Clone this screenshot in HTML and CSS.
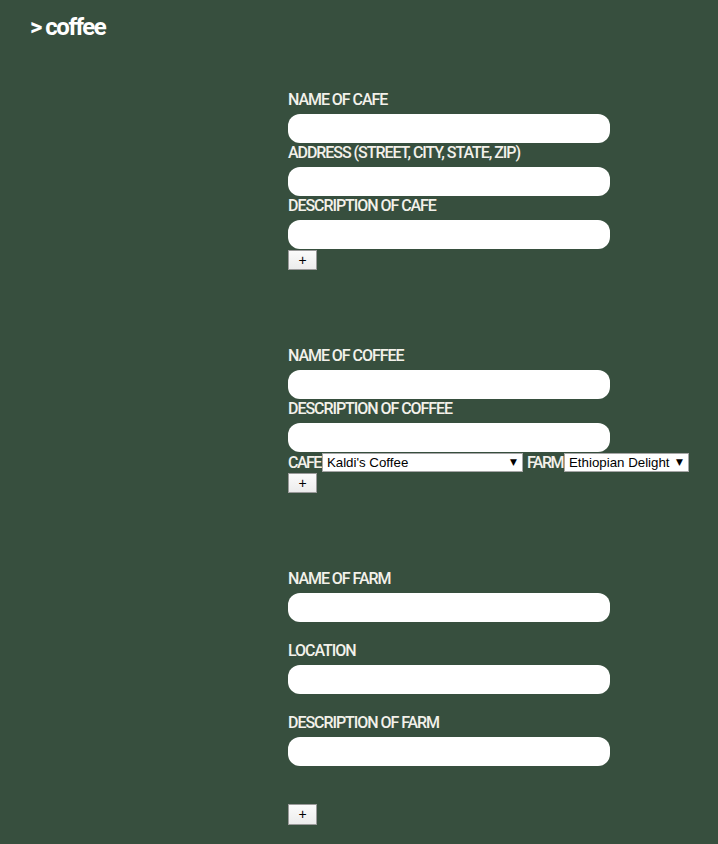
FILE: index.html
```html
<!DOCTYPE html>
<html>
<head>
<meta charset="utf-8">
<link rel="stylesheet" href="styles.css">
</head>
<body>
<header class="brand">&gt; coffee</header>
<main class="forms">
  <form class="card card-cafe">
    <label class="lbl">NAME OF CAFE</label>
    <input class="field" type="text">
    <label class="lbl">ADDRESS (STREET, CITY, STATE, ZIP)</label>
    <input class="field" type="text">
    <label class="lbl">DESCRIPTION OF CAFE</label>
    <input class="field" type="text">
    <button class="add" type="button">+</button>
  </form>
  <form class="card card-coffee">
    <label class="lbl">NAME OF COFFEE</label>
    <input class="field" type="text">
    <label class="lbl">DESCRIPTION OF COFFEE</label>
    <input class="field" type="text">
    <div class="pick-row">
      <span class="pick-lbl">CAFE</span><span class="sel sel-cafe"><select><option>Kaldi's Coffee</option></select></span>
      <span class="pick-lbl farm">FARM</span><span class="sel sel-farm"><select><option>Ethiopian Delight</option></select></span>
    </div>
    <button class="add" type="button">+</button>
  </form>
  <form class="card card-farm">
    <label class="lbl">NAME OF FARM</label>
    <input class="field" type="text">
    <label class="lbl spaced">LOCATION</label>
    <input class="field" type="text">
    <label class="lbl spaced">DESCRIPTION OF FARM</label>
    <input class="field" type="text">
    <button class="add add-far" type="button">+</button>
  </form>
</main>
</body>
</html>
```

FILE: styles.css
```css
html, body {
  margin: 0;
  padding: 0;
  background: #374f3e;
  height: 100%;
}
body {
  font-family: Roboto, "Liberation Sans", sans-serif;
  color: #f3f1ea;
}
.brand {
  display: block;
  padding: 13px 0 0 30px;
  height: 77px;
  box-sizing: border-box;
  font-size: 24px;
  line-height: 28px;
  font-weight: 700;
  letter-spacing: -1.5px;
  color: #ffffff;
}
.forms {
  display: flex;
  flex-direction: column;
  gap: 76px;
  padding-left: 288px;
  padding-top: 13px;
}
.card {
  display: flex;
  flex-direction: column;
  align-items: flex-start;
  margin: 0;
}
.lbl {
  display: block;
  font-size: 16px;
  line-height: 19px;
  height: 19px;
  margin-bottom: 5px;
  letter-spacing: -1.05px;
  font-weight: 500;
}
.lbl.spaced {
  margin-top: 19px;
}
.field {
  display: block;
  width: 322px;
  height: 29px;
  box-sizing: border-box;
  border: none;
  border-radius: 12px;
  background: #ffffff;
  margin: 0;
  padding: 0 10px;
  outline: none;
}
.add {
  display: block;
  width: 29px;
  height: 20px;
  box-sizing: border-box;
  margin: 1px 0 0 0;
  padding: 0;
  border: 1px solid #9a9a9a;
  background: linear-gradient(#fbfbfb, #ececec);
  font-family: "Liberation Sans", Arial, sans-serif;
  font-size: 14px;
  line-height: 17px;
  color: #000;
  text-align: center;
}
.add-far {
  margin-top: 38px;
  height: 21px;
}
.pick-row {
  display: flex;
  align-items: center;
  height: 20px;
}
.pick-lbl {
  font-size: 16px;
  line-height: 19px;
  letter-spacing: -1.5px;
  font-weight: 500;
  margin-right: 1px;
}
.pick-lbl.farm {
  margin-left: 4px;
}
.sel {
  position: relative;
  display: block;
  height: 19px;
}
.sel select {
  appearance: none;
  -webkit-appearance: none;
  display: block;
  height: 19px;
  box-sizing: border-box;
  border: 1px solid #a6a6a6;
  background: #ffffff;
  border-radius: 0;
  font-family: "Liberation Sans", Arial, sans-serif;
  font-size: 13.3px;
  color: #000;
  padding: 0 0 0 4px;
  margin: 0;
  outline: none;
}
.sel::after {
  content: "\25BC";
  position: absolute;
  right: 6px;
  top: 4px;
  font-size: 9px;
  line-height: 10px;
  color: #000;
  font-family: "DejaVu Sans", sans-serif;
  pointer-events: none;
}
.sel-cafe select { width: 201px; }
.sel-farm select { width: 125px; }
```
